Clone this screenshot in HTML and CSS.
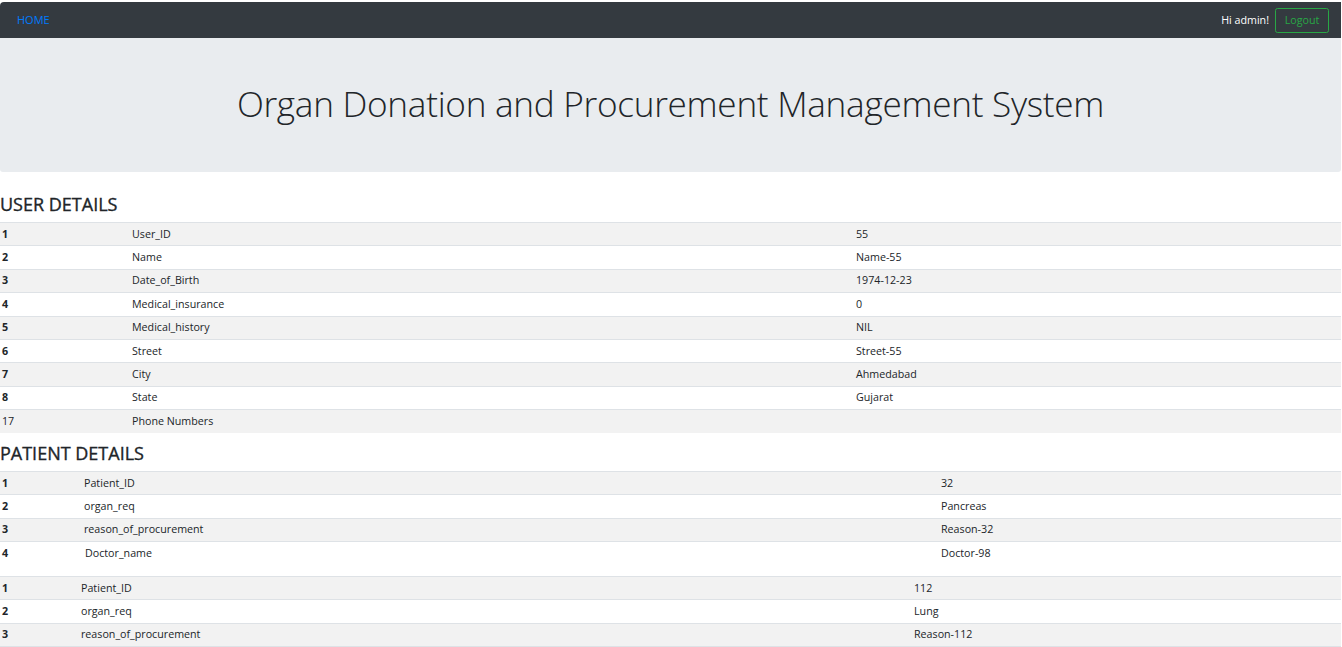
FILE: index.html
```html
<!DOCTYPE html>
<html lang="en">
<head>
<meta charset="utf-8">
<title>Organ Donation and Procurement Management System</title>
<link rel="stylesheet" href="styles.css">
</head>
<body>
<div class="page">
  <nav class="navbar">
    <a class="nav-link" href="#">HOME</a>
    <div class="nav-right">
      <span class="greet">Hi admin!</span>
      <button class="btn-logout">Logout</button>
    </div>
  </nav>
  <header class="jumbotron">
    <h1 class="display">Organ Donation and Procurement Management System</h1>
  </header>

  <h3 class="section-title">USER DETAILS</h3>
  <table class="table t-user">
    <tbody>
      <tr><th>1</th><td>User_ID</td><td>55</td></tr>
      <tr><th>2</th><td>Name</td><td>Name-55</td></tr>
      <tr><th>3</th><td>Date_of_Birth</td><td>1974-12-23</td></tr>
      <tr><th>4</th><td>Medical_insurance</td><td>0</td></tr>
      <tr><th>5</th><td>Medical_history</td><td>NIL</td></tr>
      <tr><th>6</th><td>Street</td><td>Street-55</td></tr>
      <tr><th>7</th><td>City</td><td>Ahmedabad</td></tr>
      <tr><th>8</th><td>State</td><td>Gujarat</td></tr>
      <tr><td>17</td><td>Phone Numbers</td><td></td></tr>
    </tbody>
  </table>

  <h3 class="section-title">PATIENT DETAILS</h3>
  <table class="table t-pat1">
    <tbody>
      <tr><th>1</th><td>Patient_ID</td><td>32</td></tr>
      <tr><th>2</th><td>organ_req</td><td>Pancreas</td></tr>
      <tr><th>3</th><td>reason_of_procurement</td><td>Reason-32</td></tr>
      <tr><th>4</th><td class="indent">Doctor_name</td><td>Doctor-98</td></tr>
    </tbody>
  </table>
  <table class="table t-pat2">
    <tbody>
      <tr><th>1</th><td>Patient_ID</td><td>112</td></tr>
      <tr><th>2</th><td>organ_req</td><td>Lung</td></tr>
      <tr><th>3</th><td>reason_of_procurement</td><td>Reason-112</td></tr>
    </tbody>
  </table>
</div>
</body>
</html>
```

FILE: styles.css
```css
html, body {
  margin: 0;
  padding: 0;
  background: #fff;
  overflow: hidden;
}
body {
  font-family: "Open Sans", "Noto Sans", sans-serif;
  font-size: 10.7px;
  line-height: 1.5;
  color: #212529;
}
.page {
  width: 1341px;
  padding-top: 2px;
}
.navbar {
  height: 36px;
  background: #343a40;
  border-top-left-radius: 4px;
  display: flex;
  align-items: center;
  justify-content: space-between;
  padding: 0 12px 0 17px;
}
.nav-link {
  color: #007bff;
  text-decoration: none;
  font-size: 11px;
}
.nav-right {
  display: flex;
  align-items: center;
  gap: 6px;
}
.greet {
  color: #fff;
  font-size: 10.7px;
}
.btn-logout {
  font-family: inherit;
  font-size: 10.7px;
  color: #28a745;
  background: transparent;
  border: 1px solid #28a745;
  border-radius: 2.5px;
  width: 54px;
  height: 25px;
  padding: 0;
}
.jumbotron {
  background: #e9ecef;
  height: 134px;
  border-radius: 0 0 3px 3px;
  display: flex;
  justify-content: center;
  padding-top: 43px;
  box-sizing: border-box;
  margin-bottom: 21px;
}
.display {
  margin: 0;
  font-size: 35.2px;
  font-weight: 300;
  line-height: 45px;
  letter-spacing: -0.3px;
}
.section-title {
  margin: 0 0 6.6px 0;
  font-size: 18px;
  font-weight: 400;
  line-height: 22.4px;
  -webkit-text-stroke: 0.35px currentColor;
}
.table {
  width: 100%;
  border-collapse: collapse;
  margin-bottom: 9.4px;
}
.table th, .table td {
  text-align: left;
  padding: 2.6px 2px 3.8px;
  border-top: 1px solid #dee2e6;
  line-height: 16px;
  height: 16px;
  vertical-align: top;
}
.table th { font-weight: 700; }
.table tr:nth-child(odd) { background: rgba(0, 0, 0, 0.05); }
.table td.indent { text-indent: 1px; }
.t-pat1 { margin-bottom: 11.6px; }
.t-pat2 { border-bottom: 1px solid #dee2e6; }
.t-user th:first-child, .t-user td:first-child { width: 126px; }
.t-user td:nth-child(2) { width: 720px; }
.t-pat1 th:first-child { width: 78px; }
.t-pat1 td:nth-child(2) { width: 853px; }
.t-pat2 th:first-child { width: 75px; }
.t-pat2 td:nth-child(2) { width: 829px; }
```
